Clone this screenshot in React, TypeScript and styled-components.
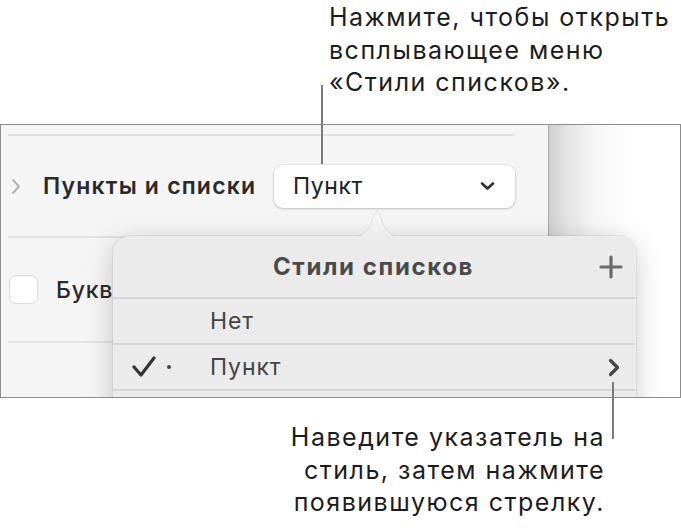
import React from 'react';
import styled, { createGlobalStyle } from 'styled-components';

const GlobalStyle = createGlobalStyle`
  html, body {
    margin: 0;
    padding: 0;
    background: #fff;
  }
  body {
    font-family: Inter, "Noto Sans", "DejaVu Sans", sans-serif;
    -webkit-font-smoothing: antialiased;
  }
`;

const Page = styled.div`
  position: relative;
  width: 681px;
  height: 532px;
  overflow: hidden;
  background: #fff;
`;

const Note = styled.div<{ $align: 'left' | 'right' }>`
  font-size: 25px;
  letter-spacing: 1.5px;
  line-height: 32.5px;
  color: #1c1c1c;
  white-space: nowrap;
  text-align: ${(p) => p.$align};
`;

const TopNote = styled(Note)`
  height: 124px;
  box-sizing: border-box;
  padding: 1px 0 0 329px;
`;

const BottomNote = styled(Note)`
  padding: 23px 76px 0 0;
`;

const Leader = styled.div<{ $x: number; $top: number; $height: number }>`
  position: absolute;
  left: ${(p) => p.$x}px;
  top: ${(p) => p.$top}px;
  width: 2px;
  height: ${(p) => p.$height}px;
  background: #7b7b7b;
  z-index: 5;
`;

const Frame = styled.div`
  position: relative;
  display: flex;
  box-sizing: border-box;
  width: 681px;
  height: 274px;
  border: 1px solid #8c8c8c;
  overflow: hidden;
`;

const Sidebar = styled.div`
  width: 548px;
  flex: none;
  box-sizing: border-box;
  padding: 9px 33px 0 7px;
  background: #f5f5f5;
  border-right: 1px solid #a9a9a9;
`;

const Canvas = styled.div`
  flex: 1;
  background: linear-gradient(
    to right,
    #cfcfcf 0,
    #e4e4e4 18px,
    #f6f6f6 45px,
    #fff 80px
  );
`;

const Divider = styled.div`
  height: 2px;
  background: #e2e2e2;
`;

const SectionRow = styled.div<{ $height: number }>`
  display: flex;
  align-items: center;
  height: ${(p) => p.$height}px;
  white-space: nowrap;
`;

const Disclosure = styled.svg`
  width: 10px;
  height: 17px;
  margin: 0 22px 0 3px;
  flex: none;
`;

const SectionTitle = styled.span`
  font-size: 23px;
  font-weight: 600;
  letter-spacing: 1.2px;
  color: #2a2a2a;
  flex: 1;
`;

const PopupButton = styled.div`
  display: flex;
  align-items: center;
  justify-content: space-between;
  flex: none;
  box-sizing: border-box;
  width: 241px;
  height: 43px;
  padding: 0 20px 0 19px;
  background: #fff;
  border-radius: 9px;
  box-shadow: 0 0 0 1px rgba(0, 0, 0, 0.05), 0 1px 3px rgba(0, 0, 0, 0.18);
  font-size: 23px;
  letter-spacing: 0.6px;
  color: #222;
`;

const Checkbox = styled.div`
  width: 27px;
  height: 27px;
  margin-left: 1px;
  border-radius: 7px;
  background: #fff;
  border: 1px solid #dcdcdc;
  box-shadow: inset 0 1px 1px rgba(0, 0, 0, 0.04);
  flex: none;
`;

const CheckLabel = styled.span`
  margin-left: 18px;
  font-size: 23px;
  font-weight: 500;
  letter-spacing: 0.8px;
  color: #2a2a2a;
`;

const Popover = styled.div`
  position: absolute;
  left: 112px;
  top: 111px;
  width: 523px;
  height: 220px;
  background: #ebebeb;
  border-radius: 17px 17px 0 0;
  box-shadow: 0 0 0 1px rgba(0, 0, 0, 0.05), 0 6px 28px rgba(0, 0, 0, 0.2);
`;

const Arrow = styled.svg`
  position: absolute;
  left: 238px;
  top: -26px;
  width: 52px;
  height: 27px;
  overflow: visible;
`;

const PopoverHeader = styled.div`
  position: relative;
  display: flex;
  align-items: center;
  justify-content: center;
  height: 61px;
  padding-right: 2px;
  font-size: 24px;
  font-weight: 700;
  letter-spacing: 1.6px;
  color: #4a4a4a;
`;

const AddButton = styled.svg`
  position: absolute;
  right: 13px;
  top: 19px;
  width: 24px;
  height: 24px;
`;

const MenuDivider = styled.div`
  height: 2px;
  background: #d7d7d7;
`;

const MenuItem = styled.div`
  position: relative;
  display: flex;
  align-items: center;
  height: 44px;
  padding-left: 97px;
  font-size: 23px;
  letter-spacing: 0.9px;
  color: #444;
`;

const CheckMark = styled.svg`
  position: absolute;
  left: 19px;
  top: 11px;
  width: 24px;
  height: 22px;
`;

const Bullet = styled.span`
  position: absolute;
  left: 54px;
  top: 20px;
  width: 4px;
  height: 4px;
  border-radius: 50%;
  background: #444;
`;

const SubmenuChevron = styled.svg`
  position: absolute;
  right: 16px;
  top: 13px;
  width: 12px;
  height: 19px;
`;

export default function App() {
  return (
    <>
      <GlobalStyle />
      <Page>
        <TopNote $align="left">
          Нажмите, чтобы открыть
          <br />
          всплывающее меню
          <br />
          «Стили списков».
        </TopNote>

        <Frame>
          <Sidebar>
            <Divider />
            <SectionRow $height={100}>
              <Disclosure viewBox="0 0 10 17">
                <path d="M2 2 L8 8.5 L2 15" fill="none" stroke="#b3b3b3" strokeWidth="2" strokeLinecap="round" strokeLinejoin="round" />
              </Disclosure>
              <SectionTitle>Пункты и списки</SectionTitle>
              <PopupButton>
                Пункт
                <svg width="15" height="10" viewBox="0 0 15 10">
                  <path d="M2 2.5 L7.5 7.5 L13 2.5" fill="none" stroke="#2e2e2e" strokeWidth="2.6" strokeLinecap="round" strokeLinejoin="round" />
                </svg>
              </PopupButton>
            </SectionRow>
            <Divider />
            <SectionRow $height={103}>
              <Checkbox />
              <CheckLabel>Буквенный маркер</CheckLabel>
            </SectionRow>
            <Divider />
          </Sidebar>
          <Canvas />

          <Popover>
            <Arrow viewBox="0 0 52 27">
              <defs>
                <linearGradient id="arrowFill" x1="0" y1="0" x2="0" y2="1">
                  <stop offset="0" stopColor="#f6f6f6" />
                  <stop offset="1" stopColor="#ececec" />
                </linearGradient>
              </defs>
              <path
                d="M0 27 C10 27 14 24 19 16 L24 3 C25 0.5 27 0.5 28 3 L33 16 C38 24 42 27 52 27 Z"
                fill="url(#arrowFill)"
                stroke="rgba(0,0,0,0.08)"
                strokeWidth="1"
              />
              <rect x="0" y="26" width="52" height="2" fill="#ebebeb" />
            </Arrow>
            <PopoverHeader>
              Стили списков
              <AddButton viewBox="0 0 24 24">
                <path d="M12 2 V22 M2 12 H22" stroke="#6a6a6a" strokeWidth="3.2" strokeLinecap="round" />
              </AddButton>
            </PopoverHeader>
            <MenuDivider />
            <MenuItem>Нет</MenuItem>
            <MenuDivider />
            <MenuItem>
              <CheckMark viewBox="0 0 24 22">
                <path d="M2 11 L9 19 L22 2" fill="none" stroke="#333" strokeWidth="3.2" strokeLinecap="round" strokeLinejoin="round" />
              </CheckMark>
              <Bullet />
              Пункт
              <SubmenuChevron viewBox="0 0 12 19">
                <path d="M2.5 2.5 L9.5 9.5 L2.5 16.5" fill="none" stroke="#444" strokeWidth="3.2" strokeLinecap="round" strokeLinejoin="round" />
              </SubmenuChevron>
            </MenuItem>
            <MenuDivider />
            <MenuItem />
          </Popover>
        </Frame>

        <BottomNote $align="right">
          Наведите указатель на
          <br />
          стиль, затем нажмите
          <br />
          появившуюся стрелку.
        </BottomNote>

        <Leader $x={321} $top={85} $height={79} />
        <Leader $x={612} $top={382} $height={57} />
      </Page>
    </>
  );
}
